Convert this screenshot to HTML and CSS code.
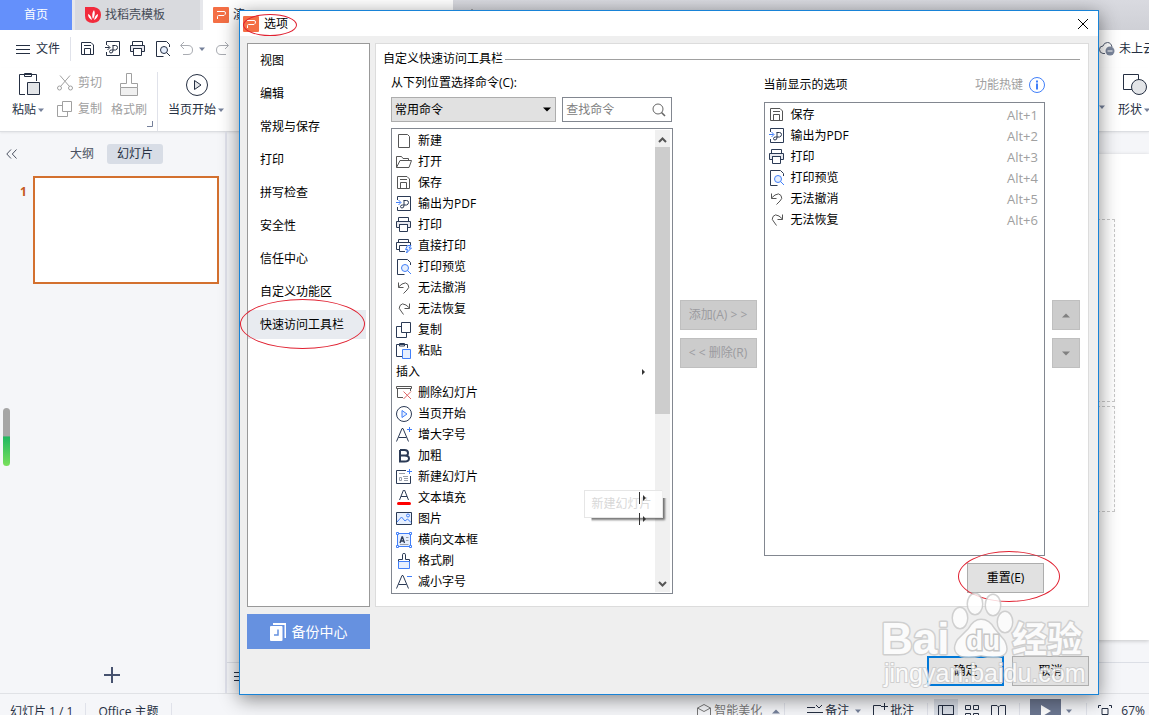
FILE: index.html
```html
<!DOCTYPE html>
<html lang="zh-CN">
<head>
<meta charset="utf-8">
<title>选项</title>
<link rel="stylesheet" href="styles.css">
</head>
<body>
<svg class="sprite" aria-hidden="true">
  <symbol id="logo" viewBox="0 0 16 16"><rect width="16" height="16" rx="1" fill="#f46f45" stroke="none"/><path d="M4 4.500H11Q12.500 4.500 12.500 6T11 8.500H5.500Q4.500 8.500 4.500 9.500V12" fill="none" stroke="#fff"/></symbol>
  <symbol id="new" viewBox="0 0 16 16"><path d="M2.500 1.500H11.500L13.500 3.500V14.500H2.500Z"/></symbol>
  <symbol id="open" viewBox="0 0 16 16"><path d="M.5 13.500V2.500H5.500L7 4.500H12.500V6.500M.5 13.500L4 6.500H15.500L13 13.500Z"/></symbol>
  <symbol id="save" viewBox="0 0 16 16"><path d="M1.500 1.500H11L13.500 4V13.500H1.500ZM4.500 13.500V7.500H10.500V13.500M4 4.500H11"/></symbol>
  <symbol id="pdf" viewBox="0 0 16 16"><path d="M1.500 4V.5H14.500V14.500H1.500V11M7.500 4.500H10.500Q12.500 4.500 12.500 6.500T10.500 9H6.500Q4.500 9 4.500 10.500T6 12Q8 12 8 9.500V4.500"/><path class="accent" d="M0 6.500H4.500M2.500 4L5 6.500L2.500 9"/></symbol>
  <symbol id="print" viewBox="0 0 16 16"><path class="soft" d="M.5 4.500H14.500V10.500H11.500V7.500H3.500V10.500H.5Z"/><path d="M2.500 4.500V.5H12.500V4.500M3.500 7.500H11.500V14.500H3.500Z"/></symbol>
  <symbol id="direct" viewBox="0 0 16 16"><path d="M2.500 4.500V1.500H12.500V4.500M3.500 11.500H.5V4.500H14.500V7.500M9 13.500H3.500V7.500H11"/><path class="accent tint" d="M11.500 7.500H15L13 10H15.500L10.500 15L11.500 11.500H9.500Z"/></symbol>
  <symbol id="preview" viewBox="0 0 16 16"><path d="M8.500 15.500H1.500V.5H11.500L14.500 3.500V6"/><circle class="accent tint" cx="9" cy="9" r="3.500"/><path class="accent" d="M11.500 11.500L15 15"/></symbol>
  <symbol id="undo" viewBox="0 0 16 16"><path d="M2.500 2.500V7.500H7.500M2.500 7L6 4Q10 1.500 12 4.500T11 10L7.500 13.500"/></symbol>
  <symbol id="redo" viewBox="0 0 16 16"><path d="M13.500 2.500V7.500H8.500M13.500 7L10 4Q6 1.500 4 4.500T5 10L7.500 13.500"/></symbol>
  <symbol id="copy" viewBox="0 0 16 16"><path d="M5.500 .5H14.500V10.500H5.500ZM5.500 4.500H.5V15.500H10.500V10.500"/></symbol>
  <symbol id="paste" viewBox="0 0 16 16"><path d="M6 13.500H.5V1.500H11.500V5M3.500 .5H8.500V3H3.500Z"/><path class="accent tint" d="M6.500 6.500H14.500V15.500H6.500Z"/></symbol>
  <symbol id="delete" viewBox="0 0 16 16"><path d="M.5 1.500H15.500V3.500H.5ZM1.500 3.500V12.500H7M14.500 3.500V6"/><path class="danger" d="M7.500 6.500L15 14M15 6.500L7.500 14"/></symbol>
  <symbol id="play" viewBox="0 0 16 16"><circle cx="8" cy="8" r="7.500"/><path class="accent tint" d="M6 4.500L11 8L6 11.500Z"/></symbol>
  <symbol id="bigger" viewBox="0 0 16 16"><path d="M.5 14.500L6 1.500H7L12.500 14.500M2.500 10.500H10.500"/><path class="accent" d="M13.500 0V5M11 2.500H16"/></symbol>
  <symbol id="smaller" viewBox="0 0 16 16"><path d="M.5 14.500L6 1.500H7L12.500 14.500M2.500 10.500H10.500"/><path class="accent" d="M11 2.500H16"/></symbol>
  <symbol id="bold" viewBox="0 0 16 16"><path stroke-width="2" d="M4 2H8.500Q12 2 12 5T8.500 7.500H4M8.500 7.500Q13 7.500 13 10.500T8.500 13.500H4V2"/></symbol>
  <symbol id="slide" viewBox="0 0 16 16"><path d="M10 1.500H.5V14.500H14.500V7"/><path class="faint" d="M3 4.500H9M3.500 8.500H5.500V11.500H3.500ZM7 7.500H12M8 9.500H12M8 11.500H12"/><path class="accent" d="M13.500 0V5M11 2.500H16"/></symbol>
  <symbol id="fill" viewBox="0 0 16 16"><path d="M3.500 10L7.500 0H8.500L12.500 10M5 6.500H11"/><rect x="1" y="12" width="14" height="3" rx="1.500" fill="#f00" stroke="none"/></symbol>
  <symbol id="picture" viewBox="0 0 16 16"><path class="tint" d="M.5 1.500H15.500V13.500H.5Z"/><path class="accent" d="M1 11L5.500 6L9 10L11.500 8L15 11.500"/><circle class="accent" cx="12" cy="4.500" r="1.500"/></symbol>
  <symbol id="textbox" viewBox="0 0 16 16"><path class="accent tint" d="M1.500 1.500H14.500V14.500H1.500Z"/><path class="accent white" d="M.5 .5H2.500V2.500H.5ZM13.500 .5H15.500V2.500H13.500ZM.5 13.500H2.500V15.500H.5ZM13.500 13.500H15.500V15.500H13.500Z"/><path stroke-width="1.300" d="M4 11L6 5H6.500L8.500 11M5 9H8"/><path class="faint" d="M10 5.500H12.500M10 8.500H12.500M4 12.500H12.500"/></symbol>
  <symbol id="brush" viewBox="0 0 16 16"><path d="M2.500 9V6.500H6.500V1.500Q6.500 .5 8 .5T9.500 1.500V6.500H13.500V9"/><path class="accent tint" d="M2.500 8.500H13.500V15.500H2.500Z"/></symbol>
  <symbol id="lens" viewBox="0 0 16 16"><circle cx="7" cy="7" r="5"/><path stroke-width="1.600" d="M10.500 10.500L14 14"/></symbol>
  <symbol id="info" viewBox="0 0 16 16"><circle cx="8" cy="8" r="7.500"/><path stroke-width="2" d="M8 3.500V5.500M8 6.500V12.500"/></symbol>
  <symbol id="caret" viewBox="0 0 8 5"><path d="M0 .5H8L4 4.500Z" fill="currentColor" stroke="none"/></symbol>
  <symbol id="caret-small" viewBox="0 0 8 5"><path d="M1 .5H7L4 4Z" fill="currentColor" stroke="none"/></symbol>
  <symbol id="caret-up" viewBox="0 0 8 5"><path d="M0 4.500H8L4 .5Z" fill="currentColor" stroke="none"/></symbol>
  <symbol id="caret-right" viewBox="0 0 8 8"><path d="M3 1L6 4L3 7Z" fill="currentColor" stroke="none"/></symbol>
  <symbol id="scissors" viewBox="0 0 16 16"><circle cx="2.500" cy="13" r="2"/><circle cx="13.500" cy="13" r="2"/><path d="M3.500 11.500L13 .5M12.500 11.500L3 .5"/></symbol>
</svg>

<div class="app">
  <header class="tabs">
    <button class="tab home">首页</button>
    <button class="tab template"><svg class="flame" viewBox="0 0 16 16"><path d="M0 0H9Q16 1 16 8T8 16Q0 16 0 9Z" fill="#f22b3c"/><path d="M7 13Q3 11 3 7Q6 8 7 13M8 12Q6 7 9 3Q11 7 8 12M9 13Q10 8 13 7Q13 11 9 13" fill="#fff"/></svg>找稻壳模板</button>
    <button class="tab document"><svg class="icon"><use href="#logo"/></svg>演</button>
    <button class="tab plus" aria-label="新建"><svg class="icon" viewBox="0 0 16 16"><path d="M8 2V14M2 8H14"/></svg></button>
  </header>

  <div class="quick">
    <button class="file"><svg class="lines" viewBox="0 0 14 11"><path d="M0 1.500H14M0 5.500H14M0 9.500H14"/></svg>文件</button>
    <span class="rule"></span>
    <div class="quick-icons">
      <button aria-label="保存"><svg class="icon"><use href="#save"/></svg></button>
      <button aria-label="输出为PDF"><svg class="icon"><use href="#pdf"/></svg></button>
      <button aria-label="打印"><svg class="icon"><use href="#print"/></svg></button>
      <button aria-label="打印预览"><svg class="icon"><use href="#preview"/></svg></button>
    </div>
    <div class="quick-history">
      <button aria-label="撤消"><svg class="icon" viewBox="0 0 16 16"><path d="M5 1L1.500 4.500L5 8M2 4.500H9Q13.500 4.500 13.500 9T9 13.500H4"/></svg></button>
      <svg class="caret"><use href="#caret-small"/></svg>
      <button aria-label="恢复"><svg class="icon" viewBox="0 0 16 16"><path d="M11 1L14.500 4.500L11 8M14 4.500H7Q2.500 4.500 2.500 9T7 13.500H12"/></svg></button>
    </div>
    <button class="cloud"><svg class="icon" viewBox="0 0 16 16"><path d="M6 12.500H4Q.5 12 .5 8.500T4 5Q5 1.500 8.500 1.500T13 6"/><circle cx="11" cy="10" r="4.500" fill="#7b869c" stroke="none"/><path d="M8.500 10H13.500" stroke="#fff"/></svg>未上云</button>
  </div>

  <div class="ribbon">
    <button class="tool"><svg class="tool-icon" viewBox="0 0 24 24"><path d="M8 22.500H2.500V2.500H19.500V9M7.500 1.500H14.500V4.500H7.500Z"/><path d="M10.500 10.500H22.500V22.500H10.500Z" fill="#e3e5e8"/></svg><span>粘贴<svg class="caret"><use href="#caret-small"/></svg></span></button>
    <div class="pair">
      <button><svg class="icon"><use href="#scissors"/></svg>剪切</button>
      <button><svg class="icon"><use href="#copy"/></svg>复制</button>
    </div>
    <button class="tool muted"><svg class="tool-icon" viewBox="0 0 24 24"><path d="M3.500 15.500V11.500H9.500V1.500H14.500V11.500H20.500V15.500"/><path d="M3.500 15.500H20.500V23.500H3.500Z" fill="#f0f0f0"/></svg><span>格式刷</span></button>
    <svg class="corner" viewBox="0 0 6 6"><path d="M5.500 0V5.500H0"/></svg>
    <span class="rule tall"></span>
    <button class="tool start"><svg class="tool-icon" viewBox="0 0 24 24"><circle cx="12" cy="13" r="10.500"/><path d="M9.500 8.500L16 13L9.500 17.500Z" fill="#e3e5e8"/></svg><span>当页开始<svg class="caret"><use href="#caret-small"/></svg></span></button>
    <div class="shape-group">
      <svg class="caret"><use href="#caret-small"/></svg>
      <button class="tool"><svg class="tool-icon" viewBox="0 0 24 24"><path d="M.5 2.500H15.500V17.500H.5Z"/><circle cx="16" cy="15" r="7.500" fill="#e3e5e8"/></svg><span>形状<svg class="caret"><use href="#caret-small"/></svg></span></button>
    </div>
  </div>

  <main class="workspace">
    <aside class="outline">
      <div class="outline-tabs">
        <button class="collapse" aria-label="收起"><svg viewBox="0 0 11 10"><path d="M5 .5L.8 5L5 9.500M10.500 .5L6.300 5L10.500 9.500"/></svg></button>
        <button>大纲</button>
        <button class="on">幻灯片</button>
      </div>
      <div class="slide-row"><span class="slide-number">1</span><button class="thumb" aria-label="幻灯片 1"></button></div>
      <button class="add-slide" aria-label="新建幻灯片"><svg viewBox="0 0 16 16"><path d="M8 0V16M0 8H16"/></svg></button>
      <span class="meter"></span>
    </aside>
    <section class="editor">
      <div class="canvas"><div class="page"><span class="holder title-holder"></span><span class="holder sub-holder"></span></div></div>
      <div class="notes"><svg class="lines" viewBox="0 0 14 11"><path d="M0 1.500H14M0 5.500H14M0 9.500H14"/></svg></div>
    </section>
  </main>

  <footer class="status">
    <span class="status-text">幻灯片 1 / 1</span><span class="rule"></span>
    <span class="status-text">Office 主题</span><span class="rule"></span>
    <div class="status-tools">
      <button class="beauty"><svg class="icon" viewBox="0 0 16 16"><path d="M1.500 5L8 1.500L14.500 5V12L8 15.500L1.500 12ZM1.500 5L8 8.500L14.500 5"/></svg>智能美化<svg class="caret up"><use href="#caret-up"/></svg></button><span class="rule wide"></span>
      <button class="note-button"><svg class="icon" viewBox="0 0 16 16"><path d="M0 4.500H8M0 9.500H16M9 2L12 5L15 2"/></svg>备注<svg class="caret"><use href="#caret-small"/></svg></button>
      <button><svg class="icon" viewBox="0 0 16 16"><path d="M9 2.500H1.500V14.500H5M12.500 0V7M9 3.500H16"/></svg>批注</button><span class="rule"></span>
      <button class="view on" aria-label="普通视图"><svg class="icon" viewBox="0 0 16 16"><path d="M.5 2.500H15.500V14.500H.5ZM4.500 2.500V14.500M4.500 11.500H15.500"/></svg></button>
      <button class="view" aria-label="浏览视图"><svg class="icon" viewBox="0 0 16 16"><path d="M1.500 2.500H6.500V6.500H1.500ZM9.500 2.500H14.500V6.500H9.500ZM1.500 10.500H6.500V14.500H1.500ZM9.500 10.500H14.500V14.500H9.500Z"/></svg></button>
      <button class="view" aria-label="阅读视图"><svg class="icon" viewBox="0 0 16 16"><path d="M1.500 14.500V2.500H7L8.500 4L10 2.500H15.500V14.500M8.500 4V14.500"/></svg></button><span class="rule"></span>
      <button class="present" aria-label="放映"><svg viewBox="0 0 10 14"><path d="M0 1L10 7L0 13Z"/></svg></button><svg class="caret"><use href="#caret-small"/></svg><span class="rule"></span>
      <button class="zoom"><svg class="icon" viewBox="0 0 16 16"><path d="M4 2.500H1.500V5M12 2.500H14.500V5M4 14.500H1.500V12M12 14.500H14.500V12M5 5.500H11V11.500H5Z"/></svg>67%</button>
    </div>
  </footer>
</div>

<div class="dialog" role="dialog" aria-labelledby="dialog-title">
  <div class="titlebar">
    <div class="title"><svg class="icon"><use href="#logo"/></svg><span id="dialog-title">选项</span><i class="ring title-ring"></i></div>
    <button class="close" aria-label="关闭"><svg viewBox="0 0 10 10"><path d="M0 0L10 10M10 0L0 10"/></svg></button>
  </div>
  <div class="dialog-body">
    <nav class="sections">
      <button>视图</button><button>编辑</button><button>常规与保存</button><button>打印</button><button>拼写检查</button><button>安全性</button><button>信任中心</button><button>自定义功能区</button>
      <button class="selected">快速访问工具栏<i class="ring nav-ring"></i></button>
    </nav>

    <section class="panel">
      <h2 class="panel-title">自定义快速访问工具栏</h2>
      <div class="transfer">
        <div class="source">
          <label for="category">从下列位置选择命令(C):</label>
          <div class="filters">
            <span class="select"><select id="category"><option>常用命令</option></select><svg class="caret"><use href="#caret"/></svg></span>
            <span class="search"><input type="text" aria-label="查找命令" placeholder="查找命令"><svg class="icon"><use href="#lens"/></svg></span>
          </div>
          <div class="list-box">
            <ul class="commands">
              <li class="gray"><svg class="icon"><use href="#new"/></svg>新建</li>
              <li class="gray"><svg class="icon"><use href="#open"/></svg>打开</li>
              <li class="gray"><svg class="icon"><use href="#save"/></svg>保存</li>
              <li><svg class="icon"><use href="#pdf"/></svg>输出为PDF</li>
              <li><svg class="icon"><use href="#print"/></svg>打印</li>
              <li><svg class="icon"><use href="#direct"/></svg>直接打印</li>
              <li><svg class="icon"><use href="#preview"/></svg>打印预览</li>
              <li class="gray"><svg class="icon"><use href="#undo"/></svg>无法撤消</li>
              <li class="gray"><svg class="icon"><use href="#redo"/></svg>无法恢复</li>
              <li><svg class="icon"><use href="#copy"/></svg>复制</li>
              <li><svg class="icon"><use href="#paste"/></svg>粘贴</li>
              <li>插入<span class="more"><svg><use href="#caret-right"/></svg></span></li>
              <li class="gray"><svg class="icon"><use href="#delete"/></svg>删除幻灯片</li>
              <li><svg class="icon"><use href="#play"/></svg>当页开始</li>
              <li><svg class="icon"><use href="#bigger"/></svg>增大字号</li>
              <li><svg class="icon"><use href="#bold"/></svg>加粗</li>
              <li><svg class="icon"><use href="#slide"/></svg>新建幻灯片</li>
              <li><svg class="icon"><use href="#fill"/></svg>文本填充<span class="more split"><svg><use href="#caret-right"/></svg></span></li>
              <li><svg class="icon"><use href="#picture"/></svg>图片<span class="more split"><svg><use href="#caret-right"/></svg></span></li>
              <li><svg class="icon"><use href="#textbox"/></svg>横向文本框</li>
              <li><svg class="icon"><use href="#brush"/></svg>格式刷</li>
              <li><svg class="icon"><use href="#smaller"/></svg>减小字号</li>
            </ul>
            <div class="scrollbar">
              <svg viewBox="0 0 9 6"><path d="M1 5L4.500 1.500L8 5"/></svg>
              <span class="track"><span class="thumb-bar"></span></span>
              <svg viewBox="0 0 9 6"><path d="M1 1L4.500 4.500L8 1"/></svg>
            </div>
            <span class="tooltip" role="tooltip">新建幻灯片</span>
          </div>
        </div>

        <div class="stack">
          <button class="btn" disabled>添加(A) &gt; &gt;</button>
          <button class="btn" disabled>&lt; &lt; 删除(R)</button>
        </div>

        <div class="target">
          <div class="target-head"><span>当前显示的选项</span><span class="hotkey">功能热键<svg class="icon"><use href="#info"/></svg></span></div>
          <div class="list-box">
            <ul class="commands">
              <li class="gray"><svg class="icon"><use href="#save"/></svg>保存<kbd>Alt+1</kbd></li>
              <li><svg class="icon"><use href="#pdf"/></svg>输出为PDF<kbd>Alt+2</kbd></li>
              <li><svg class="icon"><use href="#print"/></svg>打印<kbd>Alt+3</kbd></li>
              <li><svg class="icon"><use href="#preview"/></svg>打印预览<kbd>Alt+4</kbd></li>
              <li class="gray"><svg class="icon"><use href="#undo"/></svg>无法撤消<kbd>Alt+5</kbd></li>
              <li class="gray"><svg class="icon"><use href="#redo"/></svg>无法恢复<kbd>Alt+6</kbd></li>
            </ul>
          </div>
          <span class="reset"><button class="btn">重置(E)</button><i class="ring reset-ring"></i></span>
        </div>

        <div class="stack">
          <button class="btn" disabled aria-label="上移"><svg class="caret"><use href="#caret-up"/></svg></button>
          <button class="btn" disabled aria-label="下移"><svg class="caret"><use href="#caret"/></svg></button>
        </div>
      </div>
    </section>

    <button class="backup"><svg viewBox="0 0 16 18"><path d="M3 0H16V15H14.500V2H3Z" fill="#fff"/><rect y="3" width="12.500" height="15" rx="1" fill="#fff"/><path d="M8 6.500V12H4" fill="none" stroke="#6691e0" stroke-width="1.500"/></svg>备份中心</button>
    <div class="actions">
      <button class="btn primary">确定</button>
      <button class="btn">取消</button>
    </div>
  </div>
  <svg class="watermark" viewBox="0 0 212 104">
    <g class="mark">
      <text x="3" y="64" class="latin">Bai</text>
      <text x="134" y="62" class="han">经验</text>
      <ellipse cx="82" cy="28" rx="7" ry="10"/><ellipse cx="97" cy="14" rx="7" ry="10"/><ellipse cx="115" cy="15" rx="7" ry="10"/><ellipse cx="127" cy="32" rx="7" ry="10"/>
      <path d="M103 30Q111 30 116 39L126 51Q132 63 122 66Q114 68 103 65Q92 68 84 66Q73 62 80 50L91 39Q96 30 103 30Z"/>
      <text x="6" y="92" class="url">jingyan.baidu.com</text>
    </g>
    <text x="88" y="60" class="du">du</text>
  </svg>
</div>
</body>
</html>
```

FILE: styles.css
```css
* { box-sizing: border-box; }
html, body { height: 100%; }
body {
  margin: 0;
  overflow: hidden;
  position: relative;
  font: 12px/16px "Open Sans", "Noto Sans CJK SC", sans-serif;
  color: #000;
  --ink: #2b3a55;
  --blue: #417ff9;
}
button, input, select { font: inherit; color: inherit; margin: 0; }
button { border: 0; padding: 0; background: none; white-space: nowrap; }
svg { fill: none; stroke: currentColor; flex: none; }
.sprite { position: absolute; width: 0; height: 0; }
.icon { width: 16px; height: 16px; }
.caret { width: 8px; height: 5px; color: #75809a; }
.lines { width: 14px; height: 11px; }
.accent { stroke: var(--blue); }
.tint { fill: #e6effe; }
.white { fill: #fff; }
.soft { fill: #e8e9ef; }
.faint { stroke: #9aa0ab; }
.danger { stroke: #e06666; }
.rule { width: 1px; height: 24px; background: #e0e2ea; flex: none; }

/* application window */
.app {
  height: 100%;
  display: grid;
  grid-template-columns: minmax(0, 1fr);
  grid-template-rows: 30px 38px 64px minmax(0, 1fr) 22px;
  background: #f5f6f9;
  color: #252f42;
}
.tabs { display: flex; background: linear-gradient(#d9dae0, #cfd0d6); }
.tab { display: flex; align-items: center; }
.home { width: 72px; justify-content: center; background: #6490fb; color: #fff; }
.template { width: 131px; padding-left: 10px; gap: 4px; background: #d9dade; border: solid #e6e7eb; border-width: 0 3px; color: #454b57; }
.flame { width: 16px; height: 16px; stroke: none; }
.document { width: 250px; padding-left: 10px; gap: 4px; background: #fff; }
.plus { padding: 0 11px; color: #666; }

.quick { display: flex; align-items: center; background: #fff; overflow: hidden; }
.quick button { display: flex; align-items: center; }
.file { gap: 6px; padding: 0 10px 0 16px; }
.quick-icons { display: flex; gap: 9px; padding-left: 9px; --blue: #252f42; }
.quick-icons .tint { fill: #e3e5e8; }
.quick-icons .soft { fill: #fff; }
.quick-history { display: flex; align-items: center; gap: 3px; padding-left: 8px; color: #a9acb2; }
.quick-history .caret { margin-right: 5px; }
.quick .cloud { width: 50px; margin-left: auto; gap: 4px; overflow: hidden; color: #252f42; }
.cloud .icon { color: #555f73; }

.ribbon { display: flex; align-items: flex-start; padding: 4px 0 0 12px; background: #fff; border-bottom: 1px solid #dcdee2; box-shadow: 0 1px 2px #0001; overflow: hidden; }
.tool { display: flex; flex-direction: column; align-items: center; gap: 6px; }
.tool-icon { width: 24px; height: 24px; }
.tool span { display: flex; align-items: center; gap: 1px; }
.muted, .pair { color: #a0a0a0; }
.pair { display: grid; gap: 10px; padding: 3px 9px 0 12px; }
.pair button { display: flex; gap: 5px; align-items: center; }
.corner { width: 6px; height: 6px; align-self: flex-end; margin-bottom: 4px; color: #75809a; }
.tall { height: 60px; margin: 0 10px 0 4px; }
.shape-group { display: flex; align-items: center; gap: 12px; width: 51px; margin-left: auto; overflow: hidden; }
.shape-group > .caret { margin-top: 24px; }

.workspace { display: flex; min-height: 0; }
.outline { width: 227px; border-right: 2px solid #e0e2ec; display: flex; flex-direction: column; position: relative; flex: none; }
.outline-tabs { display: flex; align-items: center; padding: 12px 0 12px 6px; color: #4b5261; }
.outline-tabs .on { margin-left: 13px; padding: 2px 10px; border-radius: 3px; background: #d8dde6; color: #252f42; }
.collapse { width: 11px; height: 10px; margin-right: 53px; display: flex; }
.slide-row { display: flex; padding-left: 20px; gap: 6px; }
.slide-number { width: 7px; padding-top: 8px; color: #c55a20; font-weight: 700; }
.thumb { width: 186px; height: 108px; background: #fff; border: 2px solid #d3702f; }
.add-slide { margin: auto auto 10px 104px; width: 16px; height: 16px; display: flex; color: #46526f; }
.add-slide svg { stroke-width: 2; }
.meter { position: absolute; left: 3px; top: 276px; width: 7px; height: 58px; border-radius: 4px; background: linear-gradient(#a6a6a6 48%, #22b860 50%, #79e05c); }

.editor { flex: 1; min-width: 0; display: flex; flex-direction: column; }
.canvas { flex: 1; display: flex; padding: 22px 0 22px 60px; }
.page { flex: 1; background: #fff; box-shadow: 0 1px 4px #0003; padding: 65px 34px 0 60px; }
.holder { display: block; border: 1px dashed #c8c8c8; }
.title-holder { height: 183px; }
.sub-holder { height: 106px; margin-top: 4px; }
.notes { height: 31px; border-top: 1px solid #dcdfe6; padding: 7px; }

.status { border-top: 1px solid #e0e2e6; overflow: hidden; display: flex; align-items: flex-start; padding: 9px 0 0 10px; gap: 12px; white-space: nowrap; }
.status-text { height: 16px; line-height: 18px; }
.status-tools { margin-left: auto; display: flex; align-items: flex-start; height: 16px; padding-right: 4px; gap: 10px; }
.status-tools button { display: flex; align-items: center; gap: 2px; }
.status-tools .zoom { gap: 8px; }
.status-tools .rule { margin-left: 3px; }
.status-tools .wide { margin: 0 12px 0 -6px; }
.beauty { color: #777; }
.beauty .caret { margin-left: 8px; }
.note-button .caret { margin-left: 3px; }
.view.on { box-shadow: 0 0 0 4px #d8dde6; background: #d8dde6; }
.status .present { width: 31px; height: 24px; margin-top: -4px; justify-content: center; background: #6b7690; }
.present svg { width: 10px; height: 14px; fill: #fff; stroke: none; }
.status-tools > .caret { margin: 6px -6px 0; }
.status-tools > .caret + .rule { margin-left: 9px; }

/* options dialog */
.dialog {
  position: absolute;
  inset: 10px 50px 20px 239px;
  display: flex;
  flex-direction: column;
  background: #efefef;
  border: 1px solid #1883d7;
  box-shadow: 0 4px 18px #0007;
}
.titlebar { display: flex; justify-content: space-between; align-items: center; height: 25px; padding: 0 10px 0 3px; background: #fff; }
.title { position: relative; display: flex; align-items: center; gap: 5px; }
.close { display: flex; }
.close svg { width: 10px; height: 10px; }
.dialog-body { flex: 1; min-height: 0; display: grid; grid-template: minmax(0, 1fr) auto / 123px minmax(0, 1fr); gap: 7px 5px; padding: 7px 9px 8px 7px; }
.sections { display: flex; flex-direction: column; gap: 4px; padding: 2px 3px 2px 0; background: #fff; border: 1px solid #999; }
.sections button { height: 29px; padding-left: 12px; text-align: left; position: relative; }
.sections .selected { background: #e8ebf0; }

.panel { display: flex; flex-direction: column; padding: 7px 8px 12px 7px; background: #fff; border: 1px solid #dcdcdc; }
.panel-title { display: flex; align-items: center; gap: 2px; margin: 0 0 7px; font-size: 12px; font-weight: 400; line-height: 16px; }
.panel-title::after { content: ""; flex: 1; height: 1px; background: #a0a0a0; }
.transfer { flex: 1; min-height: 0; display: grid; grid-template-columns: minmax(0, 1fr) 77px minmax(0, 1fr) 28px; gap: 7px; padding-left: 8px; }
.source, .target { display: flex; flex-direction: column; min-height: 0; }
.source label { line-height: 18px; margin-bottom: 5px; }
.filters { display: grid; grid-template-columns: 3fr 2fr; gap: 6px; height: 25px; margin-bottom: 6px; }
.select { display: grid; }
.select > *, .search > * { grid-area: 1 / 1; }
.select select { appearance: none; border: 1px solid #adadad; border-radius: 0; background: #e1e1e1; padding: 0 3px; width: 100%; }
.select .caret { justify-self: end; align-self: center; margin-right: 5px; color: #000; pointer-events: none; }
.search { display: grid; }
.search input { width: 100%; min-width: 0; border: 1px solid #828790; padding: 0 24px 0 3px; background: #fff; }
.search input::placeholder { color: #808080; opacity: 1; }
.search .icon { justify-self: end; align-self: center; margin-right: 5px; color: #666; }
.list-box { flex: 1; min-height: 0; display: flex; position: relative; border: 1px solid #828790; background: #fff; padding: 1px 2px 1px 0; }
.commands { flex: 1; min-width: 0; margin: 0; padding: 0; list-style: none; overflow: hidden; }
.commands li { height: 21px; padding: 0 4px; display: flex; align-items: center; gap: 6px; color: #000; }
.commands .icon { color: var(--ink); }
.commands .gray .icon { color: #555; }
.commands kbd { margin-left: auto; font: inherit; font-size: 13px; color: #a0a0a0; }
.more { position: relative; z-index: 1; margin-left: auto; display: flex; align-items: center; width: 12px; height: 12px; color: #333; }
.split { border-left: 1px solid #333; }
.more svg { width: 8px; height: 8px; }
.scrollbar { width: 15px; display: flex; flex-direction: column; align-items: center; background: #f0f0f0; padding: 7px 0 5px; gap: 4px; color: #555; }
.scrollbar svg { width: 9px; height: 6px; stroke-width: 2; }
.track { flex: 1; width: 100%; }
.thumb-bar { display: block; height: 62%; background: #cdcdcd; }
.tooltip { position: absolute; right: 9px; bottom: 75px; width: 79px; height: 28px; padding: 5px 7px; border: 1px solid #e6e6e6; background: #fffc; color: #d8d8d8; box-shadow: 2px 2px 2px #0008; clip-path: polygon(0 0, 100% 0, 100% 8px, 110% 8px, 110% 120%, 8px 120%, 8px 100%, 0 100%); }

.btn { height: 30px; border: 1px solid #adadad; background: #e1e1e1; }
.btn:disabled { background: #ccc; border-color: #bfbfbf; color: #9b9b9f; }
.btn .caret { display: block; margin: auto; color: #808080; }
.stack { display: flex; flex-direction: column; justify-content: center; gap: 8px; }
.target-head { display: flex; justify-content: space-between; align-items: center; height: 22px; margin-bottom: 6px; }
.hotkey { display: flex; gap: 6px; align-items: center; color: #a0a0a0; }
.hotkey .icon { color: var(--blue); }
.reset { align-self: flex-end; position: relative; margin: 7px 1px 1px 0; display: flex; }
.reset .btn, .actions .btn { width: 77px; }

.backup { height: 35px; display: flex; align-items: center; justify-content: center; gap: 6px; background: #6691e0; color: #fff; font-size: 14px; }
.backup svg { width: 16px; height: 18px; stroke: none; }
.actions { height: 72px; display: flex; justify-content: flex-end; align-items: flex-end; gap: 8px; }
.primary { border: 2px solid #0078d7; }

/* red annotation rings */
.ring { position: absolute; border: 1px solid #e02030; border-radius: 50%; pointer-events: none; z-index: 1; }
.title-ring { inset: -2px -9px -4px 0; }
.nav-ring { inset: -11px 1px -10px -8px; }
.reset-ring { inset: -12px -16px -9px -9px; }

.watermark { position: absolute; right: 8px; bottom: 0; width: 212px; height: 104px; pointer-events: none; z-index: 2; opacity: .8; }
.mark { fill: #fff; stroke: #c8c8c8; stroke-width: 3px; paint-order: stroke; stroke-linejoin: round; }
.latin { font: 700 44px "Liberation Sans", sans-serif; }
.han { font: 700 35px "Noto Sans CJK SC", sans-serif; }
.url { font: 25px "Liberation Sans", sans-serif; stroke-width: 2px; }
.du { font: 700 28px "Liberation Sans", sans-serif; fill: #fff; stroke: #bcbcbc; stroke-width: 3px; paint-order: stroke; }
```
